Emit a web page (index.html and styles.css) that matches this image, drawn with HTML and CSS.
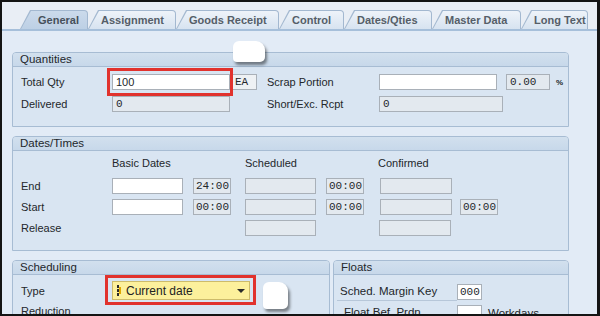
FILE: index.html
```html
<!DOCTYPE html>
<html lang="en">
<head>
  <meta charset="UTF-8">
  <title>Production Order - General</title>
  <link rel="stylesheet" href="styles.css">
</head>
<body>
  <div class="screen">
    <!-- Tab strip -->
    <div class="tabstrip">
      <div class="tab tab-general active"><span>General</span></div>
      <div class="tab tab-assign"><span>Assignment</span></div>
      <div class="tab tab-goods"><span>Goods Receipt</span></div>
      <div class="tab tab-control"><span>Control</span></div>
      <div class="tab tab-dates"><span>Dates/Qties</span></div>
      <div class="tab tab-master"><span>Master Data</span></div>
      <div class="tab tab-long"><span>Long Text</span></div>
    </div>

    <div class="content">
      <!-- Quantities -->
      <section class="group">
        <div class="group-title">Quantities</div>
        <div class="group-body qty-body">
          <div class="row">
            <span class="lbl">Total Qty</span>
            <span class="field input w118">100</span>
            <span class="field unit mono">EA</span>
            <span class="lbl lbl-mid">Scrap Portion</span>
            <span class="field input w118"></span>
            <span class="field mono w44 gap9">0.00</span>
            <span class="pct">%</span>
          </div>
          <div class="row">
            <span class="lbl">Delivered</span>
            <span class="field mono w118">0</span>
            <span class="lbl lbl-mid lbl-skip">Short/Exc. Rcpt</span>
            <span class="field mono w124">0</span>
          </div>
        </div>
      </section>

      <!-- Dates/Times -->
      <section class="group group-dates">
        <div class="group-title">Dates/Times</div>
        <div class="group-body dates-body">
          <div class="row heads">
            <span class="lbl"></span>
            <span class="head">Basic Dates</span>
            <span class="head">Scheduled</span>
            <span class="head">Confirmed</span>
          </div>
          <div class="row">
            <span class="lbl">End</span>
            <span class="field input w71"></span>
            <span class="field mono time gap10">24:00</span>
            <span class="field w71 gap14"></span>
            <span class="field mono time gap10">00:00</span>
            <span class="field w72 gap16"></span>
          </div>
          <div class="row">
            <span class="lbl">Start</span>
            <span class="field input w71"></span>
            <span class="field mono time gap10">00:00</span>
            <span class="field w71 gap14"></span>
            <span class="field mono time gap10">00:00</span>
            <span class="field w72 gap16"></span>
            <span class="field mono time gap8">00:00</span>
          </div>
          <div class="row">
            <span class="lbl">Release</span>
            <span class="skip-basic"></span>
            <span class="field w71"></span>
            <span class="skip-time"></span>
            <span class="field w72"></span>
          </div>
        </div>
      </section>

      <div class="lower">
        <!-- Scheduling -->
        <section class="group group-sched">
          <div class="group-title">Scheduling</div>
          <div class="group-body sched-body">
            <div class="row row-tall">
              <span class="lbl">Type</span>
              <div class="dropdown">
                <svg class="type-icon" width="6" height="12" viewBox="0 0 6 12">
                  <rect x="1" y="0" width="2" height="3" fill="#2b2b2b"/>
                  <rect x="1" y="4" width="2" height="3" fill="#2b2b2b"/>
                  <rect x="1" y="8" width="2" height="3" fill="#2b2b2b"/>
                  <rect x="3" y="2" width="2" height="7" fill="#e0a800"/>
                </svg>
                <span class="dd-text">Current date</span>
                <span class="dd-arrow"></span>
              </div>
            </div>
            <div class="row">
              <span class="lbl">Reduction</span>
            </div>
          </div>
        </section>

        <!-- Floats -->
        <section class="group group-floats">
          <div class="group-title">Floats</div>
          <div class="group-body floats-body">
            <div class="frow">
              <span class="flbl">Sched. Margin Key</span>
              <span class="field input mono w25">000</span>
            </div>
            <div class="frow">
              <span class="flbl flbl-sub">Float Bef. Prdn</span>
              <span class="field input w25"></span>
              <span class="unit-text">Workdays</span>
            </div>
          </div>
        </section>
      </div>
    </div>

    <!-- annotation marks -->
    <div class="mark mark-qty"></div>
    <div class="mark mark-type"></div>
    <div class="blob blob-top"></div>
    <div class="blob blob-bottom"></div>
  </div>
</body>
</html>
```

FILE: styles.css
```css
* {
  box-sizing: border-box;
}
body {
  margin: 0;
  font-family: "Liberation Sans", Arial, sans-serif;
  font-size: 11px;
  color: #23272b;
}
/* Window frame */
.screen {
  position: relative;
  width: 600px;
  height: 316px;
  border: solid #141414;
  border-width: 2px 3px 2px 2px;
  background: #e2ebf6;
  overflow: hidden;
}
/* Tabs */
.tabstrip {
  display: flex;
  align-items: flex-end;
  height: 29px;
  padding-left: 18px;
  background: #e9eef5;
  border-bottom: 2px solid #a6bfda;
}
.tab {
  height: 19px;
  padding: 1px 1px 0;
  background: #a3b8d0;
  clip-path: polygon(0 100%, 10px 0, 100% 0, 100% 100%);
  border-radius: 0 4px 0 0;
}
.tab span {
  display: block;
  height: 18px;
  padding-left: 12px;
  line-height: 18px;
  background: linear-gradient(#eef3f9, #d7e3f0);
  clip-path: polygon(0 100%, 10px 0, 100% 0, 100% 100%);
  border-radius: 0 3px 0 0;
  font-weight: bold;
  color: #555e68;
  white-space: nowrap;
}
.tab.active span {
  padding-left: 17px;
  background: linear-gradient(#cbdaeb, #bdd0e5);
  color: #46505a;
}
.tab-general { width: 68px; }
.tab-assign { width: 88px; }
.tab-goods { width: 103px; }
.tab-control { width: 65px; }
.tab-dates { width: 88px; }
.tab-master { width: 89px; }
.tab-long { width: 67px; }
/* Content */
.content {
  padding: 21px 0 0 10px;
}
.group {
  width: 557px;
  border: 1px solid #a7bcd3;
  border-radius: 4px 4px 0 0;
  background: #d9e5f2;
}
.group-title {
  height: 14px;
  padding-left: 7px;
  line-height: 13px;
  font-size: 11.5px;
  background: linear-gradient(#d2e0ee, #c7d8ea);
  border-bottom: 1px solid #a7bcd3;
  border-radius: 3px 3px 0 0;
}
.group-body {
  display: flex;
  flex-direction: column;
  padding-left: 8px;
}
.qty-body {
  gap: 6px;
  padding-top: 7px;
  padding-bottom: 14px;
}
.group-dates {
  margin-top: 9px;
}
.dates-body {
  gap: 5px;
  padding-top: 5px;
  padding-bottom: 14px;
}
.dates-body .heads {
  height: 14px;
  margin-bottom: 3px;
}
.row {
  display: flex;
  align-items: center;
  height: 16px;
}
.lbl {
  flex: none;
  width: 91px;
  white-space: nowrap;
}
.lbl-mid {
  width: 112px;
  margin-left: 10px;
}
.lbl-skip {
  margin-left: 37px;
}
.head {
  flex: none;
  width: 133px;
}
.field {
  flex: none;
  height: 16px;
  padding: 0 3px;
  line-height: 14px;
  border: 1px solid #a9b0b8;
  background: #e3e9ef;
  white-space: nowrap;
  overflow: hidden;
}
.field.input {
  background: #fff;
}
.mono {
  font-family: "Liberation Mono", "DejaVu Sans Mono", monospace;
  font-size: 11px;
}
.unit {
  width: 25px;
  margin-left: 2px;
  padding: 0 2px;
  background: #eef1f4;
}
.w25 { width: 25px; padding: 0 2px; }
.w44 { width: 44px; }
.w71 { width: 71px; }
.w72 { width: 72px; }
.w118 { width: 118px; }
.w124 { width: 124px; }
.time { width: 38px; padding: 0 2px; }
.gap8 { margin-left: 8px; }
.gap9 { margin-left: 9px; }
.gap10 { margin-left: 10px; }
.gap14 { margin-left: 14px; }
.gap16 { margin-left: 16px; }
.skip-basic { flex: none; width: 133px; }
.skip-time { flex: none; width: 63px; }
.pct {
  margin-left: 6px;
  font-size: 8px;
  font-weight: bold;
}
/* Lower groups */
.lower {
  display: flex;
  gap: 3px;
  margin-top: 9px;
}
.group-sched {
  width: 318px;
}
.group-floats {
  width: 236px;
}
.sched-body {
  gap: 3px;
  padding-top: 6px;
}
.row-tall {
  height: 19px;
}
.dropdown {
  display: flex;
  align-items: center;
  width: 138px;
  height: 19px;
  padding: 0 4px 0 3px;
  background: #fcf09c;
  border: 1px solid #cdbb6a;
  font-size: 12px;
  color: #222;
}
.type-icon {
  flex: none;
  margin-right: 4px;
}
.dd-text {
  flex: 1;
}
.dd-arrow {
  width: 0;
  height: 0;
  border-left: 4px solid transparent;
  border-right: 4px solid transparent;
  border-top: 4px solid #2a2a2a;
}
.floats-body {
  padding-left: 3px;
  padding-top: 6px;
}
.frow {
  display: flex;
  align-items: center;
  height: 21px;
}
.flbl {
  flex: none;
  width: 120px;
  height: 19px;
  padding-left: 3px;
  line-height: 19px;
  font-size: 11.5px;
  border-bottom: 1px solid #b7c7d9;
  white-space: nowrap;
}
.flbl-sub {
  padding-left: 7px;
  border-bottom: none;
}
.unit-text {
  margin-left: 6px;
  font-size: 11.5px;
}
/* Annotation overlays */
.mark {
  position: absolute;
  border: 3px solid #e1322d;
}
.mark-qty {
  left: 105px;
  top: 66px;
  width: 126px;
  height: 28px;
}
.mark-type {
  left: 103px;
  top: 273px;
  width: 151px;
  height: 30px;
}
.blob {
  position: absolute;
  background: #fff;
  border-radius: 6px 9px 5px 4px;
  box-shadow: 2px 3px 3px rgba(0, 0, 0, 0.45);
}
.blob-top {
  left: 231px;
  top: 39px;
  width: 32px;
  height: 21px;
}
.blob-bottom {
  left: 261px;
  top: 280px;
  width: 25px;
  height: 27px;
}
```
